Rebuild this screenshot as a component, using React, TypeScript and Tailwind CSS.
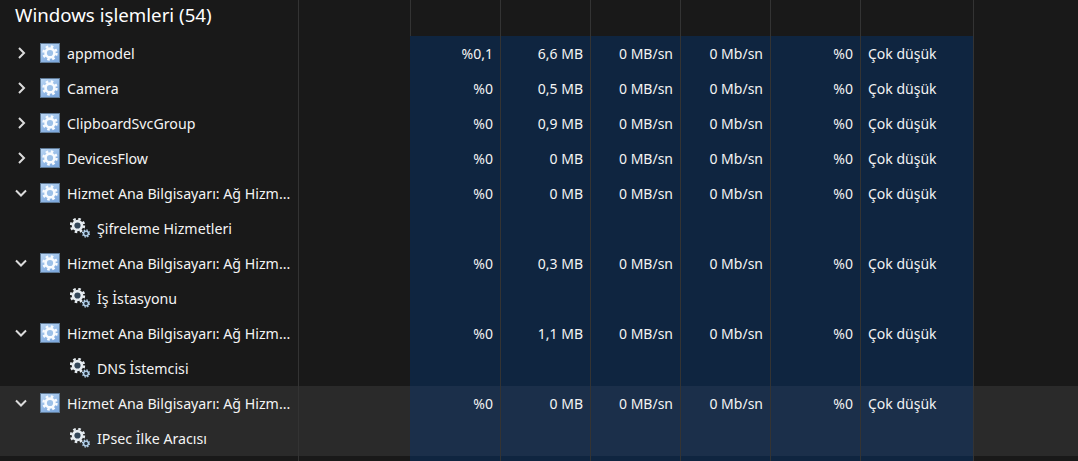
import React from 'react';

const GRID = 'grid grid-cols-[298px_112px_90px_90px_90px_90px_90px_113px_105px]';

type Row = {
    name: string;
    child?: boolean;
    open?: boolean;
    cpu?: string;
    mem?: string;
    hover?: boolean;
};

const ROWS: Row[] = [
    { name: 'appmodel', cpu: '%0,1', mem: '6,6 MB' },
    { name: 'Camera', cpu: '%0', mem: '0,5 MB' },
    { name: 'ClipboardSvcGroup', cpu: '%0', mem: '0,9 MB' },
    { name: 'DevicesFlow', cpu: '%0', mem: '0 MB' },
    { name: 'Hizmet Ana Bilgisayarı: Ağ Hizm...', open: true, cpu: '%0', mem: '0 MB' },
    { name: 'Şifreleme Hizmetleri', child: true },
    { name: 'Hizmet Ana Bilgisayarı: Ağ Hizm...', open: true, cpu: '%0', mem: '0,3 MB' },
    { name: 'İş İstasyonu', child: true },
    { name: 'Hizmet Ana Bilgisayarı: Ağ Hizm...', open: true, cpu: '%0', mem: '1,1 MB' },
    { name: 'DNS İstemcisi', child: true },
    { name: 'Hizmet Ana Bilgisayarı: Ağ Hizm...', open: true, cpu: '%0', mem: '0 MB', hover: true },
    { name: 'IPsec İlke Aracısı', child: true, hover: true },
];

const Chevron = ({ open }: { open?: boolean }) => (
    <svg width="12" height="12" viewBox="0 0 12 12" fill="none" stroke="#dcdcdc" strokeWidth="2">
        {open ? <path d="M1 3.5 L6 8.5 L11 3.5" /> : <path d="M4 1 L9 6 L4 11" />}
    </svg>
);

const Gear = ({ cx, cy, r, fill, hole }: { cx: number; cy: number; r: number; fill: string; hole: string }) => (
    <g>
        <circle cx={cx} cy={cy} r={r * 0.78} fill={fill} />
        <circle
            cx={cx}
            cy={cy}
            r={r * 0.88}
            fill="none"
            stroke={fill}
            strokeWidth={r * 0.32}
            strokeDasharray={`${(2 * Math.PI * r * 0.88) / 16} ${(2 * Math.PI * r * 0.88) / 16}`}
        />
        <circle cx={cx} cy={cy} r={r * 0.42} fill={hole} />
    </g>
);

const AppIcon = () => (
    <svg width="20" height="20" viewBox="0 0 20 20" className="mb-px shrink-0">
        <defs>
            <linearGradient id="tile" x1="0" y1="0" x2="0.6" y2="1">
                <stop offset="0" stopColor="#bcd8f5" />
                <stop offset="1" stopColor="#7ea9de" />
            </linearGradient>
        </defs>
        <rect x="0.5" y="0.5" width="19" height="19" fill="url(#tile)" stroke="#5f7a96" />
        <Gear cx={10} cy={10} r={7.4} fill="#f8fbfe" hole="#9dc1e8" />
    </svg>
);

const ServiceIcon = () => (
    <svg width="20" height="20" viewBox="0 0 20 20" className="block shrink-0">
        <Gear cx={7.5} cy={7.5} r={7.4} fill="#e6ecf1" hole="#33475a" />
        <Gear cx={16} cy={15.5} r={4} fill="#b4d2ec" hole="#26323d" />
    </svg>
);

const Num = ({ value }: { value?: string }) => (
    <div className="border-l border-[#333333] pr-[7px] text-right">{value}</div>
);

export default function App() {
    return (
        <div
            className="flex h-[461px] w-[1078px] flex-col overflow-hidden bg-[#191919] text-[14px] text-[#f4f4f4]"
            style={{ fontFamily: '"Noto Sans", "Open Sans", sans-serif' }}
        >
            <div className={`${GRID} h-9 shrink-0`}>
                <div className="pl-[15px] text-[18.7px] leading-[30px] text-white">Windows işlemleri (54)</div>
                {[0, 1, 2, 3, 4, 5, 6].map(i => <div key={i} className="border-l border-[#333333]" />)}
                <div className="border-l border-[#333333]" />
            </div>

            {ROWS.map((row, i) => {
                const blue = row.hover ? 'bg-[#1b2f4a]' : 'bg-[#0f2540]';
                return (
                    <div key={i} className={`${GRID} h-[35px] shrink-0 leading-[35px] ${row.hover ? 'bg-[#2a2a2a]' : ''}`}>
                        <div className="flex items-center whitespace-nowrap text-[14.2px]">
                            {row.child ? (
                                <>
                                    <div className="mb-px ml-[70px] mr-[7px]"><ServiceIcon /></div>
                                    <span>{row.name}</span>
                                </>
                            ) : (
                                <>
                                    <div className="mb-px ml-[15px] mr-[13px] flex w-3 justify-center"><Chevron open={row.open} /></div>
                                    <AppIcon />
                                    <span className="ml-[7px]">{row.name}</span>
                                </>
                            )}
                        </div>
                        <div className="border-l border-[#333333]" />
                        <div className={`col-span-6 grid grid-cols-[90px_90px_90px_90px_90px_113px] ${blue}`}>
                            <div className="pr-[7px] text-right">{row.cpu}</div>
                            <Num value={row.mem} />
                            <Num value={row.cpu && '0 MB/sn'} />
                            <Num value={row.cpu && '0 Mb/sn'} />
                            <Num value={row.cpu && '%0'} />
                            <div className="border-l border-[#333333] pl-[7px]">{row.cpu && 'Çok düşük'}</div>
                        </div>
                        <div className="border-l border-[#333333]" />
                    </div>
                );
            })}

            <div className={`${GRID} flex-1`}>
                <div />
                <div className="border-l border-[#333333]" />
                <div className="col-span-6 grid grid-cols-[90px_90px_90px_90px_90px_113px] bg-[#0f2540]">
                    <div />
                    <div className="border-l border-[#333333]" />
                    <div className="border-l border-[#333333]" />
                    <div className="border-l border-[#333333]" />
                    <div className="border-l border-[#333333]" />
                    <div className="border-l border-[#333333]" />
                </div>
                <div className="border-l border-[#333333]" />
            </div>
        </div>
    );
}
